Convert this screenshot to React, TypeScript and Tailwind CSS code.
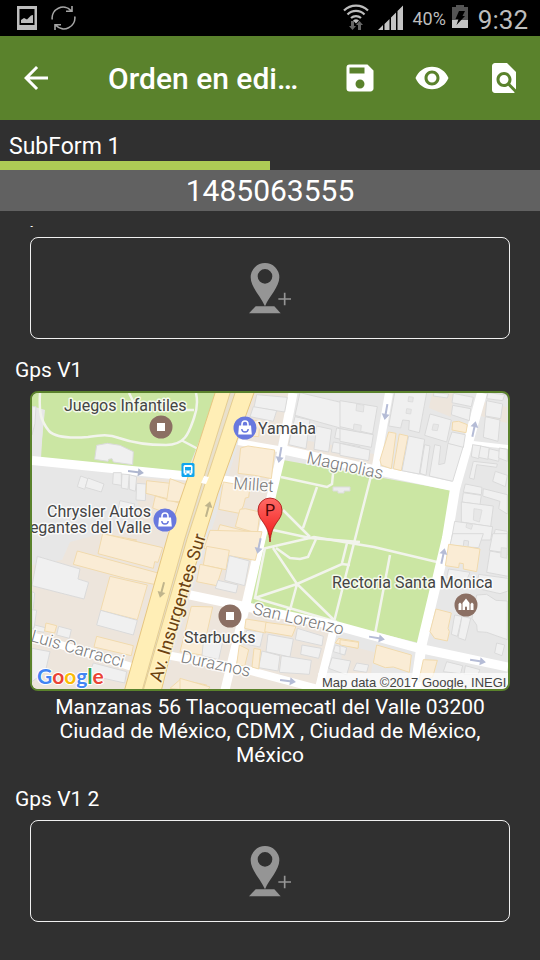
import type { ReactNode } from "react";
import { MdArrowBack, MdFindInPage, MdRemoveRedEye, MdSave } from "react-icons/md";

const font = "font-['Roboto','Noto_Sans',sans-serif]";

function StatusBar() {
  return (
    <div className="flex h-9 shrink-0 items-center bg-black px-3 text-[#bdbdbd]">
      <svg className="ml-1 h-6 w-6" viewBox="0 0 24 24" aria-hidden="true">
        <path fill="#bdbdbd" fillRule="evenodd" d="M1 0h20v24H1zM3.500 3v16h15V3z" />
        <path fill="#bdbdbd" d="M5 17v-3l3-2 3 1.500 4-4 2-.5v8z" />
      </svg>
      <svg className="ml-2.5 h-6 w-7" viewBox="0 0 28 24" fill="none" stroke="#a5a5a5" strokeWidth="1.600" aria-hidden="true">
        <path d="M2.200 13.500A11 11 0 0 1 21 4.500M22 0v5.200h-6M24.800 10.500A11 11 0 0 1 6 19.500M5 24v-5.200h6" />
      </svg>
      <div className="ml-auto flex items-center">
        <svg className="h-7 w-7" viewBox="0 0 28 28" aria-hidden="true">
          <g fill="none" stroke="#bdbdbd" strokeWidth="2.200">
            <path d="M2 6.500a17 17 0 0 1 24 0M5.500 10.500a12 12 0 0 1 17 0M9 14a7.500 7.500 0 0 1 10 0" />
          </g>
          <path fill="#bdbdbd" d="m11 16.500 3 3 3-3a4.500 4.500 0 0 0-6 0z" />
          <path fill="#666" d="M9 17h3v5h2l-3.500 4L7 22h2zM16 26v-5h-2l3.500-4 3.500 4h-2v5z" />
        </svg>
        <svg className="ml-2 h-7 w-[26px]" viewBox="0 0 26 28" fill="#c4c4c4" aria-hidden="true">
          <path d="M0 26 5 21v5zM6.500 20l5-5v11h-5zM13 13.500l5-5V26h-5zM19.500 7 25 1.500V26h-5.500z" />
        </svg>
        <span className="ml-2 pt-0.5 text-lg leading-6">40%</span>
        <svg className="mb-0.5 ml-1.5 h-6 w-4" viewBox="0 0 16 24" aria-hidden="true">
          <path fill="#555" d="M4 0h8v2h4v14H0V2h4z" />
          <path fill="#c4c4c4" d="M0 15h16v8H0z" />
          <path fill="#000" d="M7 6h6l-2.500 5H13L4.500 20l2-6H3.500z" />
        </svg>
        <span className="ml-2.5 pt-1 text-[26px] leading-9">9:32</span>
      </div>
    </div>
  );
}

function BarButton({ label, children }: { label: string; children: ReactNode }) {
  return (
    <button type="button" aria-label={label} className="flex h-full w-18 shrink-0 items-center justify-center text-4xl">
      {children}
    </button>
  );
}

type Shape = "home" | "shop" | "yard";
const fills: Record<Shape, string> = { home: "#f0f0f0", shop: "#faecd5", yard: "#e7e7e7" };
const edges: Record<Shape, string> = { home: "#dadada", shop: "#f1daad", yard: "#dedede" };

type Block = { x: number; y: number; shapes: [Shape, string][] };

/* Building footprints, grouped by map sector; three units to a map pixel. */
const blocks: Block[] = [
  {
    x: 20,
    y: 380,
    shapes: [
      ["home", "36,80 48,80 45,130 36,165"],
      ["home", "230,196 262,190 300,196 340,215 338,254 280,246 276,236 266,238 264,244 224,238"],
      ["home", "182,288 204,296 194,328 172,320"],
      ["home", "204,294 252,312 244,336 196,322"],
      ["home", "280,278 304,278 304,316 278,312"],
      ["home", "306,282 328,284 324,328 304,324"],
      ["home", "328,284 350,290 346,334 328,328"],
      ["home", "350,310 378,312 376,362 348,360"],
      ["home", "300,362 344,372 338,400 294,390"],
      ["shop", "380,302 504,316 490,368 378,340"],
      ["shop", "406,348 480,370 468,410 398,384"],
      ["shop", "250,462 350,480 245,480"],
    ],
  },
  {
    x: 180,
    y: 380,
    shapes: [
      ["home", "230,44 322,52 314,96 222,82"],
      ["home", "220,80 290,92 280,124 210,110"],
      ["shop", "215,120 240,124 236,170 210,168"],
      ["home", "360,38 495,70 480,144 345,106"],
      ["home", "495,66 560,80 556,150 482,132"],
      ["home", "345,110 390,120 378,206 326,194"],
      ["home", "410,138 455,148 446,216 402,208"],
      ["home", "470,144 540,158 540,190 464,174"],
      ["home", "460,186 540,200 540,232 454,216"],
      ["shop", "182,204 204,198 284,210 274,296 224,286 174,280"],
      ["shop", "130,306 210,320 206,352 196,354 190,378 178,400 116,388"],
      ["shop", "180,388 196,386 240,396 232,460 166,440"],
      ["shop", "120,434 234,462 230,480 104,480"],
      ["shop", "-30,296 24,316 4,366 -40,362"],
    ],
  },
  {
    x: 340,
    y: 380,
    shapes: [
      ["home", "0,62 112,80 98,162 0,140"],
      ["yard", "50,72 72,76 70,96 48,92"],
      ["yard", "42,132 64,136 62,156 40,150"],
      ["home", "0,146 100,164 94,202 0,184"],
      ["home", "0,190 90,210 86,242 0,226"],
      ["home", "164,38 260,38 238,158 206,150 208,122 188,120 182,144 146,138"],
      ["yard", "206,50 220,52 218,66 204,64"],
      ["yard", "200,86 214,88 212,102 198,100"],
      ["shop", "146,156 168,160 154,266 124,256 120,240"],
      ["shop", "178,162 204,168 184,272 160,266"],
      ["home", "206,168 254,178 238,282 186,272"],
      ["home", "254,194 270,198 258,286 240,280"],
      ["home", "284,194 302,198 296,254 314,250 324,190 370,198 338,304 268,288"],
      ["home", "270,102 334,120 320,186 254,166"],
      ["yard", "280,132 296,134 292,152 276,150"],
      ["home", "282,38 326,42 322,54 280,48"],
      ["home", "340,40 400,52 394,80 336,68"],
      ["home", "338,76 392,86 388,122 334,104"],
      ["shop", "338,126 356,124 382,134 378,158 336,150"],
      ["home", "336,156 376,164 370,202 324,190"],
      ["home", "444,38 494,44 488,62 440,56"],
      ["home", "440,62 488,72 482,116 436,108"],
      ["home", "436,110 480,120 474,184 430,172"],
      ["home", "398,194 424,198 416,236 394,230"],
      ["home", "422,198 448,204 444,238 416,232"],
      ["home", "448,206 480,214 476,244 444,236"],
      ["home", "478,204 502,208 502,244 476,234"],
      ["home", "400,244 472,252 470,262 410,254 402,298 388,294"],
      ["home", "466,274 502,286 496,320 458,304"],
      ["home", "376,312 426,322 424,344 370,336"],
      ["home", "370,338 424,346 420,374 366,366"],
      ["home", "430,326 502,344 502,402 476,386 480,364 428,348"],
      ["home", "364,366 460,378 452,440 364,426"],
      ["yard", "402,386 426,390 418,426 400,420"],
      ["home", "344,424 458,440 452,480 334,480"],
      ["yard", "380,430 398,434 394,448 378,442"],
      ["home", "466,448 502,454 502,480 458,480"],
    ],
  },
  {
    x: 20,
    y: 535,
    shapes: [
      ["shop", "248,-4 428,38 414,82 404,80 400,100 234,56"],
      ["shop", "172,48 414,114 402,148 316,130 160,88"],
      ["shop", "270,124 382,150 352,254 242,226"],
      ["home", "52,64 180,102 174,132 206,142 192,192 36,152"],
      ["home", "242,226 352,256 340,300 230,270"],
      ["shop", "230,304 340,332 334,362 222,336"],
      ["home", "36,170 44,174 40,220 36,226"],
      ["home", "36,224 50,226 42,280 36,280"],
      ["home", "44,270 76,278 72,292 40,286"],
      ["shop", "78,264 110,272 104,294 74,288"],
      ["home", "116,274 154,284 148,310 110,300"],
      ["home", "36,340 90,350 76,410 36,440"],
      ["home", "220,384 320,410 314,444 206,420"],
      ["shop", "480,434 560,450 540,470 450,460"],
    ],
  },
  {
    x: 180,
    y: 535,
    shapes: [
      ["shop", "90,-14 246,-10 226,76 136,60 72,40"],
      ["shop", "80,34 148,46 138,104 70,90"],
      ["shop", "60,88 126,102 110,152 50,140"],
      ["home", "148,62 208,78 194,152 134,136"],
      ["home", "114,136 174,150 168,174 106,160"],
      ["shop", "34,214 98,216 66,360 0,350"],
      ["home", "72,300 130,312 116,374 66,362"],
      ["home", "200,286 250,292 240,336 190,326"],
      ["shop", "198,252 262,262 256,294 194,280"],
      ["shop", "258,262 348,274 336,304 254,290"],
      ["home", "264,298 340,312 330,366 258,350"],
      ["home", "352,280 430,304 426,332 346,314"],
      ["home", "366,330 424,340 416,370 362,358"],
      ["home", "246,348 300,362 294,408 236,398"],
      ["home", "304,362 394,376 388,418 298,412"],
      ["shop", "178,330 206,344 194,394 170,388"],
      ["shop", "222,340 242,344 236,402 216,396"],
      ["shop", "476,310 536,320 534,340 466,324"],
      ["home", "466,330 500,340 494,360 460,350"],
      ["home", "456,368 512,378 500,420 446,400"],
      ["shop", "0,430 90,456 84,464 0,464"],
    ],
  },
  {
    x: 340,
    y: 535,
    shapes: [
      ["home", "338,-4 430,-4 416,38 384,36 386,18 372,16 370,34 330,30"],
      ["shop", "326,28 370,34 386,36 420,42 410,110 370,102 370,86 358,84 356,98 316,92"],
      ["home", "458,-4 502,-4 502,54 448,46"],
      ["home", "450,48 504,58 504,124 440,112"],
      ["yard", "484,38 502,40 500,70 482,66"],
      ["home", "326,102 390,112 380,136 320,128"],
      ["home", "416,118 504,130 504,168 480,176 410,160"],
      ["shop", "288,222 334,234 324,280 328,290 322,318 284,310 270,290"],
      ["home", "344,240 366,244 352,304 334,298"],
      ["home", "366,244 392,250 376,316 354,308"],
      ["home", "410,180 440,178 468,196 502,198 502,314 440,292 412,290 410,270 396,250"],
      ["home", "470,324 494,330 486,362 464,354"],
      ["shop", "0,314 56,322 54,340 0,330"],
      ["shop", "110,330 214,360 208,412 160,396 136,398 100,384"],
      ["shop", "250,374 292,376 278,426 236,440"],
      ["home", "320,380 368,392 362,416 310,410"],
      ["home", "376,392 420,404 414,418 372,418"],
      ["home", "0,332 20,338 14,360 0,356"],
      ["home", "50,384 86,390 80,412 40,406"],
    ],
  },
];

const roads: [string, number][] = [
  ["M32 460.500 187 476 240 482", 9],
  ["M238 442 284 450", 6],
  ["M284 450 375 470 455 487", 9],
  ["M293 393 280 460 262 535 247 600 225 690", 9],
  ["M389 393 375 472", 8],
  ["M482 393 455 489 447 538 422 643 415 690", 10],
  ["M473 443 508 447", 4],
  ["M190 595 247 607 337 626 418 648 508 667", 9],
  ["M150 652 247 670 307 686 330 692", 8],
  ["M32 636 132 667", 8],
  ["M334 628 318 692", 8],
];

const parkPaths = [
  "M281 477l46 10 5-3 1-10M317 487l-14 41M273 530l37 8 50 4M283 510l27 27M372 472l-38 150",
  "M262 549l52-12 60 10 63 15M276 548l14 10 10 1 8-2 8-18M273 548l24 36 37 36M255 598l42-14 45-20 8 1M297 584l-7 26M265 548l-10 50 82 24M347 543l-5 20M390 555l-15 79",
];

const arrows: [number, number, number, string][] = [
  [136, 472, 97, "#aeb6cf"],
  [280, 455, 190, "#b5bcd6"],
  [386, 412, 190, "#b5bcd6"],
  [474, 429, 12, "#b5bcd6"],
  [443, 556, 12, "#b5bcd6"],
  [259, 546, 192, "#b5bcd6"],
  [377, 638, 100, "#b5bcd6"],
  [478, 661, 99, "#b5bcd6"],
  [288, 681, 98, "#b5bcd6"],
  [208, 509, 15, "#bfb48c"],
  [162, 590, 195, "#bfb48c"],
];

function PlaceMarker({ x, y, kind }: { x: number; y: number; kind: "dot" | "bag" | "hall" }) {
  return (
    <g transform={`translate(${x} ${y})`}>
      <circle r="11.500" fill={kind === "bag" ? "#6878de" : "#8b6f63"} />
      {kind === "dot" && <path fill="#fff" d="M-4-4h8v8h-8z" />}
      {kind === "bag" && (
        <g fill="none">
          <path d="M-3-2v-2a3 3 0 0 1 6 0v2" stroke="#fff" strokeWidth="1.600" />
          <path d="M-6-2.500H6l.8 9H-6.800z" fill="#fff" />
          <path d="M-3.200 1a3.200 3 0 0 0 6.400 0" stroke="#6878de" strokeWidth="1.400" />
        </g>
      )}
      {kind === "hall" && (
        <path fill="#fff" d="M-7.500 5v-6l1.500-1.500 1.500 1.500v6zM4.500 5v-6L6 -2.500 7.500-1v6zM-3.500 5v-7L0-6.500 3.500-2v7H1V2.500a1 1 0 0 0-2 0V5z" />
      )}
    </g>
  );
}

function StreetMap() {
  return (
    <svg
      viewBox="32 393 476 296"
      role="img"
      aria-label="Mapa de Tlacoquemecatl del Valle"
      className={`block h-auto w-full ${font}`}
    >
      <path fill="#e7e7e7" d="M30 391h480v300H30z" />
      <g fill="#ede5dc">
        <path d="M254 393h35l-63 297h-64zM135 477l52 4-62 209H32V565l30-5 8-18 30-8 40-10zM250 608l87 20-16 62h-93z" />
        <path d="M285 413l-3 32 93 22 3-12-40-9-46-8zM432 393h22l-3 24-22-9zM484 402l23 5v16l-26-7zM342 644l32 8-3 22h-30z" />
      </g>
      <path fill="#cbe6a3" d="M32 393h186l-31 79-147-14 5-48-13-4zM283 460l172 31-36 152-82-20-87-20 15-62z" />
      <path fill="#e7e7e7" d="M32 407l12 3-3 48-9-2z" />
      <g fill="none" stroke="#f2f4ec" strokeWidth="2.500">
        <path d="M40 393c-1 18 0 27 9 38 8 8 27 7 39 6 13-2 21-3 31 1 17 6 31 7 47 7 20 0 23-13 28-27 3-8 4-16 2-25M194 410h-12M181 440l19 10M129 393l5 10" />
        {parkPaths.map((d) => (
          <path key={d} d={d} />
        ))}
      </g>
      <path fill="#ececec" stroke="#dcdcdc" d="M333 487h17v4h-6v2h-6v-2h-5z" />
      <g fill="none" stroke="#fff">
        {roads.map(([d, width]) => (
          <path key={d} d={d} strokeWidth={width} />
        ))}
      </g>
      {blocks.map((block) => (
        <g key={`${block.x}-${block.y}`} transform={`translate(${block.x} ${block.y}) scale(0.33333)`} strokeWidth="3">
          {block.shapes.map(([shape, points]) => (
            <polygon key={points} points={points} fill={fills[shape]} stroke={edges[shape]} />
          ))}
        </g>
      ))}

      <path fill="#ffeeb6" stroke="#e6c680" d="M216 390 187 480 168 535 124 692H161L180 615 205 535 218 493 255 390z" />
      <path fill="#e9e0cb" stroke="#e0c688" strokeWidth=".8" d="M231 390h5l-31 94-18 55-44 152h-1l43-153 17-55z" />
      <path fill="#fff" d="M204 476l5 1-3 7-5-1z" />

      {arrows.map(([x, y, turn, color]) => (
        <path key={`${x}-${y}`} transform={`translate(${x} ${y}) rotate(${turn})`} fill={color} d="M-1 8V-2h-3l4-6 4 6H1V8z" />
      ))}

      <g transform="translate(188 470)">
        <rect x="-6.500" y="-7" width="13" height="14" rx="1.500" fill="#0fa5ee" />
        <path fill="#fff" fillRule="evenodd" d="M-4.500-3.500Q-4.500-5-3-5h6q1.500 0 1.500 1.500V3.500H3.500V5h-2V3.500h-3V5h-2V3.500h-1zM-3-3v3.500h6V-3zM-3 1.500v1h1.500v-1zM1.500 1.500v1H3v-1z" />
      </g>
      <PlaceMarker x={161} y={427} kind="dot" />
      <PlaceMarker x={245} y={428} kind="bag" />
      <PlaceMarker x={165} y={520} kind="bag" />
      <PlaceMarker x={230} y={616} kind="dot" />
      <PlaceMarker x={466} y={605} kind="hall" />

      <g fontSize="16" fill="#444" stroke="#fff" strokeWidth="3" strokeLinejoin="round" strokeOpacity=".8" paintOrder="stroke">
        <text x="64" y="411">Juegos Infantiles</text>
        <text x="258" y="434">Yamaha</text>
        <text x="151" y="517" textAnchor="end">Chrysler Autos</text>
        <text x="151" y="533" textAnchor="end">egantes del Valle</text>
        <text x="332" y="588">Rectoria Santa Monica</text>
        <text x="184" y="643">Starbucks</text>
        <g fill="#777" fontSize="17" fontWeight="300">
          <text transform="translate(306 463) rotate(12)">Magnolias</text>
          <text transform="translate(233 489) rotate(4)">Millet</text>
          <text transform="translate(252 614) rotate(13)">San Lorenzo</text>
          <text transform="translate(30 641) rotate(16)">Luis Carracci</text>
          <text transform="translate(180 662) rotate(12)">Duraznos</text>
        </g>
        <text transform="translate(161 683) rotate(-73)" fill="#6b4210" fontSize="18" stroke="#fff3cd">
          Av. Insurgentes Sur
        </text>
      </g>

      <defs>
        <linearGradient id="pin-red" x1="0" y1="0" x2="0" y2="1">
          <stop offset="0" stopColor="#ff6a66" />
          <stop offset="1" stopColor="#f01616" />
        </linearGradient>
      </defs>
      <path
        fill="url(#pin-red)"
        stroke="#a51212"
        strokeWidth=".8"
        d="M270 542c-1-10-3-14-7-20-3-4-5-7-5-12a12 12 0 0 1 24 0c0 5-2 8-5 12-4 6-6 10-7 20z"
      />
      <text x="270" y="516" textAnchor="middle" fontSize="16" fill="#4a0606">P</text>

      <text x="37" y="684" fontSize="21" className="font-['Lato','Roboto',sans-serif] font-bold" stroke="#fff" strokeWidth="2" paintOrder="stroke">
        <tspan fill="#4285f4">G</tspan>
        <tspan fill="#ea4335">o</tspan>
        <tspan fill="#fbbc05">o</tspan>
        <tspan fill="#4285f4">g</tspan>
        <tspan fill="#34a853">l</tspan>
        <tspan fill="#ea4335">e</tspan>
      </text>
      <path fill="#fff" fillOpacity=".7" d="M318 673h190v17H318z" />
      <text x="322" y="687" fontSize="13" fill="#444" className="font-['Liberation_Sans',Arial,sans-serif]">
        Map data ©2017 Google, INEGI
      </text>
    </svg>
  );
}

function AddLocation({ label }: { label: string }) {
  return (
    <button
      type="button"
      aria-label={label}
      className="flex h-[102px] w-full items-center justify-center rounded-lg border border-[#f0f0f0]"
    >
      <svg className="h-[51px] w-[42px]" viewBox="148 98 126 153" aria-hidden="true">
        <path
          fill="#959595"
          fillRule="evenodd"
          d="M196 228C182 196 153 170 153 141a43 43 0 0 1 86 0C239 170 210 196 196 228zM196 116a22 22 0 1 0 0 44 22 22 0 0 0 0-44z"
        />
        <path fill="#959595" d="M168 228h56l19 21h-95z" />
        <path stroke="#959595" strokeWidth="5" d="M236 206h38M255 187v38" />
      </svg>
    </button>
  );
}

function Field({ title, children }: { title: string; children: ReactNode }) {
  return (
    <section className="mb-[19px]">
      <h3 className="mb-[9px] px-[15px] text-[21px] leading-6">{title}</h3>
      <div className="px-[30px]">{children}</div>
    </section>
  );
}

export default function App() {
  return (
    <div className={`flex h-screen flex-col overflow-hidden bg-[#303030] text-white ${font}`}>
      <StatusBar />
      <header className="flex h-21 shrink-0 items-center bg-[#5a822c]">
        <BarButton label="Volver">
          <MdArrowBack />
        </BarButton>
        <h1 className="ml-9 min-w-0 flex-1 pt-0.5 text-3xl font-medium whitespace-nowrap">Orden en edi…</h1>
        <BarButton label="Guardar">
          <MdSave />
        </BarButton>
        <BarButton label="Ver">
          <MdRemoveRedEye />
        </BarButton>
        <BarButton label="Buscar">
          <MdFindInPage />
        </BarButton>
      </header>
      <h2 className="shrink-0 px-[9px] pt-[13px] text-[23px] leading-7">SubForm 1</h2>
      <div className="h-[9px] shrink-0">
        <div className="h-full w-1/2 bg-[#adcb55]" />
      </div>
      <div className="mb-[15px] shrink-0 bg-[#616161] pt-[1px] text-center text-3xl leading-10">1485063555</div>
      <main className="min-h-0 flex-1 overflow-hidden">
        <div className="-mt-[22px]">
          <Field title="Gps V">
            <AddLocation label="Agregar ubicación Gps V" />
          </Field>
          <Field title="Gps V1">
            <div className="overflow-hidden rounded-lg border-2 border-[#5a822c]">
              <StreetMap />
            </div>
            <p className="mt-1 pb-[1px] text-center text-[21px] leading-6">
              Manzanas 56 Tlacoquemecatl del Valle 03200 Ciudad de México, CDMX , Ciudad de México, México
            </p>
          </Field>
          <Field title="Gps V1 2">
            <AddLocation label="Agregar ubicación Gps V1 2" />
          </Field>
        </div>
      </main>
    </div>
  );
}
